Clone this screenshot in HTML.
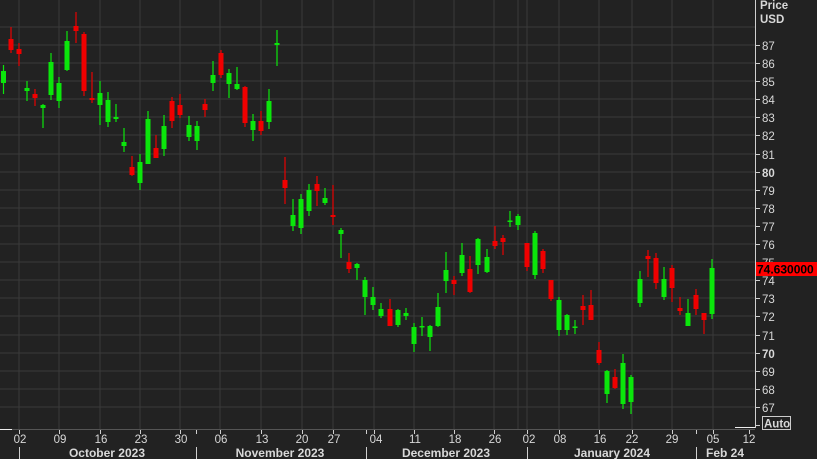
<!DOCTYPE html>
<html><head><meta charset="utf-8"><style>
html,body{margin:0;padding:0;background:#222222;width:817px;height:459px;overflow:hidden}
svg{display:block}
text{font-family:"Liberation Sans",sans-serif;fill:#d8d8d8}
.g line{stroke:#0be60b;stroke-width:1.2}
.g rect{fill:#0be60b}
.r line{stroke:#e80000;stroke-width:1.2}
.r rect{fill:#f00000}
</style></head><body>
<svg width="817" height="459" viewBox="0 0 817 459" xmlns="http://www.w3.org/2000/svg">
<rect width="817" height="459" fill="#222222"/>
<g stroke="#3a3a3a" stroke-width="1">
<line x1="0" x2="755" y1="27" y2="27"/><line x1="0" x2="755" y1="45" y2="45"/><line x1="0" x2="755" y1="63" y2="63"/><line x1="0" x2="755" y1="81" y2="81"/><line x1="0" x2="755" y1="99" y2="99"/><line x1="0" x2="755" y1="117" y2="117"/><line x1="0" x2="755" y1="135" y2="135"/><line x1="0" x2="755" y1="154" y2="154"/><line x1="0" x2="755" y1="172" y2="172"/><line x1="0" x2="755" y1="190" y2="190"/><line x1="0" x2="755" y1="208" y2="208"/><line x1="0" x2="755" y1="226" y2="226"/><line x1="0" x2="755" y1="244" y2="244"/><line x1="0" x2="755" y1="262" y2="262"/><line x1="0" x2="755" y1="280" y2="280"/><line x1="0" x2="755" y1="298" y2="298"/><line x1="0" x2="755" y1="316" y2="316"/><line x1="0" x2="755" y1="335" y2="335"/><line x1="0" x2="755" y1="353" y2="353"/><line x1="0" x2="755" y1="371" y2="371"/><line x1="0" x2="755" y1="389" y2="389"/><line x1="0" x2="755" y1="407" y2="407"/>
<line x1="19" x2="19" y1="0" y2="430"/><line x1="59" x2="59" y1="0" y2="430"/><line x1="100" x2="100" y1="0" y2="430"/><line x1="140" x2="140" y1="0" y2="430"/><line x1="180" x2="180" y1="0" y2="430"/><line x1="220" x2="220" y1="0" y2="430"/><line x1="261" x2="261" y1="0" y2="430"/><line x1="302" x2="302" y1="0" y2="430"/><line x1="333" x2="333" y1="0" y2="430"/><line x1="374" x2="374" y1="0" y2="430"/><line x1="414" x2="414" y1="0" y2="430"/><line x1="454" x2="454" y1="0" y2="430"/><line x1="494" x2="494" y1="0" y2="430"/><line x1="518" x2="518" y1="0" y2="430"/><line x1="527" x2="527" y1="0" y2="430"/><line x1="559" x2="559" y1="0" y2="430"/><line x1="599" x2="599" y1="0" y2="430"/><line x1="632" x2="632" y1="0" y2="430"/><line x1="672" x2="672" y1="0" y2="430"/><line x1="713" x2="713" y1="0" y2="430"/>
</g>
<line x1="0" x2="755" y1="429.5" y2="429.5" stroke="#555"/>
<line x1="0" x2="12" y1="429.5" y2="429.5" stroke="#eee"/>
<line x1="735" x2="755" y1="427.5" y2="427.5" stroke="#eee"/>
<line x1="755.5" x2="755.5" y1="0" y2="428" stroke="#cfcfcf"/>
<g class="g"><line x1="3.5" x2="3.5" y1="65" y2="94"/><rect x="1" y="71" width="5" height="12"/></g>
<g class="r"><line x1="11" x2="11" y1="27" y2="53"/><rect x="8.5" y="39" width="5" height="11"/></g>
<g class="r"><line x1="19" x2="19" y1="43" y2="66"/><rect x="16.5" y="49" width="5" height="5"/></g>
<g class="g"><line x1="27" x2="27" y1="81" y2="101"/><rect x="24.5" y="88" width="5" height="3"/></g>
<g class="r"><line x1="35" x2="35" y1="89" y2="106"/><rect x="32.5" y="94" width="5" height="4"/></g>
<g class="g"><line x1="43" x2="43" y1="104" y2="128"/><rect x="40.5" y="105" width="5" height="3"/></g>
<g class="g"><line x1="51" x2="51" y1="53" y2="100"/><rect x="48.5" y="62" width="5" height="33"/></g>
<g class="g"><line x1="59" x2="59" y1="77" y2="108"/><rect x="56.5" y="83" width="5" height="18"/></g>
<g class="g"><line x1="67" x2="67" y1="31" y2="71"/><rect x="64.5" y="41" width="5" height="29"/></g>
<g class="r"><line x1="76" x2="76" y1="12" y2="43"/><rect x="73.5" y="26" width="5" height="5"/></g>
<g class="r"><line x1="84" x2="84" y1="32" y2="96"/><rect x="81.5" y="34" width="5" height="57"/></g>
<g class="r"><line x1="92" x2="92" y1="72" y2="103"/><rect x="89.5" y="98" width="5" height="2"/></g>
<g class="g"><line x1="100" x2="100" y1="81" y2="125"/><rect x="97.5" y="93" width="5" height="12"/></g>
<g class="g"><line x1="108" x2="108" y1="92" y2="127"/><rect x="105.5" y="100" width="5" height="22"/></g>
<g class="g"><line x1="116" x2="116" y1="104" y2="122"/><rect x="113.5" y="117" width="5" height="2"/></g>
<g class="g"><line x1="124" x2="124" y1="128" y2="152"/><rect x="121.5" y="142" width="5" height="4"/></g>
<g class="r"><line x1="132" x2="132" y1="156" y2="176"/><rect x="129.5" y="167" width="5" height="8"/></g>
<g class="g"><line x1="140" x2="140" y1="154" y2="190"/><rect x="137.5" y="162" width="5" height="21"/></g>
<g class="g"><line x1="148" x2="148" y1="111" y2="164"/><rect x="145.5" y="119" width="5" height="45"/></g>
<g class="r"><line x1="156" x2="156" y1="135" y2="158"/><rect x="153.5" y="148" width="5" height="10"/></g>
<g class="g"><line x1="164" x2="164" y1="115" y2="156"/><rect x="161.5" y="126" width="5" height="23"/></g>
<g class="r"><line x1="172" x2="172" y1="97" y2="128"/><rect x="169.5" y="101" width="5" height="20"/></g>
<g class="r"><line x1="180" x2="180" y1="94" y2="118"/><rect x="177.5" y="105" width="5" height="10"/></g>
<g class="g"><line x1="189" x2="189" y1="116" y2="141"/><rect x="186.5" y="125" width="5" height="12"/></g>
<g class="g"><line x1="197" x2="197" y1="121" y2="150"/><rect x="194.5" y="126" width="5" height="15"/></g>
<g class="r"><line x1="205" x2="205" y1="99" y2="117"/><rect x="202.5" y="104" width="5" height="6"/></g>
<g class="g"><line x1="213" x2="213" y1="61" y2="91"/><rect x="210.5" y="75" width="5" height="8"/></g>
<g class="r"><line x1="221" x2="221" y1="50" y2="78"/><rect x="218.5" y="53" width="5" height="22"/></g>
<g class="g"><line x1="229" x2="229" y1="69" y2="98"/><rect x="226.5" y="73" width="5" height="11"/></g>
<g class="g"><line x1="237" x2="237" y1="67" y2="90"/><rect x="234.5" y="84" width="5" height="5"/></g>
<g class="r"><line x1="245" x2="245" y1="86" y2="127"/><rect x="242.5" y="87" width="5" height="36"/></g>
<g class="g"><line x1="253" x2="253" y1="114" y2="141"/><rect x="250.5" y="121" width="5" height="9"/></g>
<g class="r"><line x1="261" x2="261" y1="111" y2="135"/><rect x="258.5" y="121" width="5" height="10"/></g>
<g class="g"><line x1="269" x2="269" y1="89" y2="129"/><rect x="266.5" y="101" width="5" height="21"/></g>
<g class="g"><line x1="277" x2="277" y1="30" y2="66"/><rect x="274.5" y="43" width="5" height="2"/></g>
<g class="r"><line x1="285" x2="285" y1="157" y2="204"/><rect x="282.5" y="180" width="5" height="8"/></g>
<g class="g"><line x1="293" x2="293" y1="199" y2="231"/><rect x="290.5" y="215" width="5" height="11"/></g>
<g class="g"><line x1="301" x2="301" y1="194" y2="234"/><rect x="298.5" y="199" width="5" height="29"/></g>
<g class="g"><line x1="309" x2="309" y1="184" y2="216"/><rect x="306.5" y="190" width="5" height="21"/></g>
<g class="r"><line x1="317" x2="317" y1="176" y2="206"/><rect x="314.5" y="184" width="5" height="7"/></g>
<g class="g"><line x1="325" x2="325" y1="188" y2="205"/><rect x="322.5" y="198" width="5" height="5"/></g>
<g class="r"><line x1="333" x2="333" y1="185" y2="225"/><rect x="330.5" y="215" width="5" height="2"/></g>
<g class="g"><line x1="341" x2="341" y1="228" y2="258"/><rect x="338.5" y="230" width="5" height="4"/></g>
<g class="r"><line x1="349" x2="349" y1="253" y2="273"/><rect x="346.5" y="262" width="5" height="7"/></g>
<g class="g"><line x1="357" x2="357" y1="263" y2="280"/><rect x="354.5" y="264" width="5" height="4"/></g>
<g class="g"><line x1="365" x2="365" y1="277" y2="315"/><rect x="362.5" y="280" width="5" height="17"/></g>
<g class="g"><line x1="373" x2="373" y1="287" y2="310"/><rect x="370.5" y="297" width="5" height="8"/></g>
<g class="g"><line x1="381" x2="381" y1="303" y2="318"/><rect x="378.5" y="309" width="5" height="7"/></g>
<g class="r"><line x1="390" x2="390" y1="299" y2="326"/><rect x="387.5" y="309" width="5" height="17"/></g>
<g class="g"><line x1="398" x2="398" y1="309" y2="327"/><rect x="395.5" y="310" width="5" height="15"/></g>
<g class="g"><line x1="406" x2="406" y1="308" y2="320"/><rect x="403.5" y="313" width="5" height="3"/></g>
<g class="g"><line x1="414" x2="414" y1="323" y2="352"/><rect x="411.5" y="327" width="5" height="17"/></g>
<g class="g"><line x1="422" x2="422" y1="317" y2="336"/><rect x="419.5" y="326" width="5" height="1.5"/></g>
<g class="g"><line x1="430" x2="430" y1="325" y2="351"/><rect x="427.5" y="326" width="5" height="11"/></g>
<g class="g"><line x1="438" x2="438" y1="293" y2="327"/><rect x="435.5" y="307" width="5" height="19"/></g>
<g class="g"><line x1="446" x2="446" y1="252" y2="293"/><rect x="443.5" y="270" width="5" height="11"/></g>
<g class="r"><line x1="454" x2="454" y1="276" y2="295"/><rect x="451.5" y="280" width="5" height="4"/></g>
<g class="g"><line x1="462" x2="462" y1="243" y2="276"/><rect x="459.5" y="255" width="5" height="18"/></g>
<g class="r"><line x1="470" x2="470" y1="256" y2="293"/><rect x="467.5" y="269" width="5" height="23"/></g>
<g class="g"><line x1="478" x2="478" y1="238" y2="274"/><rect x="475.5" y="239" width="5" height="26"/></g>
<g class="g"><line x1="487" x2="487" y1="249" y2="273"/><rect x="484.5" y="257" width="5" height="15"/></g>
<g class="r"><line x1="495" x2="495" y1="226" y2="249"/><rect x="492.5" y="241" width="5" height="5"/></g>
<g class="r"><line x1="503" x2="503" y1="235" y2="255"/><rect x="500.5" y="238" width="5" height="4"/></g>
<g class="g"><line x1="510" x2="510" y1="211" y2="227"/><rect x="507.5" y="220.5" width="5" height="1.5"/></g>
<g class="g"><line x1="518" x2="518" y1="214" y2="230"/><rect x="515.5" y="216" width="5" height="9"/></g>
<g class="r"><line x1="527" x2="527" y1="243" y2="271"/><rect x="524.5" y="243" width="5" height="24"/></g>
<g class="g"><line x1="535" x2="535" y1="231" y2="279"/><rect x="532.5" y="233" width="5" height="42"/></g>
<g class="r"><line x1="543" x2="543" y1="249" y2="273"/><rect x="540.5" y="251" width="5" height="18"/></g>
<g class="r"><line x1="551" x2="551" y1="280" y2="301"/><rect x="548.5" y="280" width="5" height="19"/></g>
<g class="g"><line x1="559" x2="559" y1="297" y2="336"/><rect x="556.5" y="300" width="5" height="30"/></g>
<g class="g"><line x1="567" x2="567" y1="314" y2="335"/><rect x="564.5" y="315" width="5" height="15"/></g>
<g class="g"><line x1="575" x2="575" y1="320" y2="334"/><rect x="572.5" y="326.5" width="5" height="1.5"/></g>
<g class="r"><line x1="583" x2="583" y1="295" y2="325"/><rect x="580.5" y="306" width="5" height="4"/></g>
<g class="r"><line x1="591" x2="591" y1="290" y2="320"/><rect x="588.5" y="305" width="5" height="15"/></g>
<g class="r"><line x1="599" x2="599" y1="342" y2="365"/><rect x="596.5" y="350" width="5" height="13"/></g>
<g class="g"><line x1="607" x2="607" y1="370" y2="403"/><rect x="604.5" y="371" width="5" height="23"/></g>
<g class="r"><line x1="615" x2="615" y1="369" y2="389"/><rect x="612.5" y="377" width="5" height="11"/></g>
<g class="g"><line x1="623" x2="623" y1="354" y2="409"/><rect x="620.5" y="363" width="5" height="41"/></g>
<g class="g"><line x1="631" x2="631" y1="375" y2="414"/><rect x="628.5" y="377" width="5" height="25"/></g>
<g class="g"><line x1="640" x2="640" y1="271" y2="307"/><rect x="637.5" y="279" width="5" height="24"/></g>
<g class="r"><line x1="648" x2="648" y1="250" y2="277"/><rect x="645.5" y="256" width="5" height="3"/></g>
<g class="r"><line x1="656" x2="656" y1="253" y2="289"/><rect x="653.5" y="258" width="5" height="25"/></g>
<g class="g"><line x1="664" x2="664" y1="267" y2="300"/><rect x="661.5" y="279" width="5" height="18"/></g>
<g class="r"><line x1="672" x2="672" y1="265" y2="302"/><rect x="669.5" y="268" width="5" height="20"/></g>
<g class="r"><line x1="680" x2="680" y1="297" y2="315"/><rect x="677.5" y="308" width="5" height="3"/></g>
<g class="g"><line x1="688" x2="688" y1="299" y2="326"/><rect x="685.5" y="313" width="5" height="13"/></g>
<g class="r"><line x1="696" x2="696" y1="289" y2="315"/><rect x="693.5" y="295" width="5" height="14"/></g>
<g class="r"><line x1="704" x2="704" y1="313" y2="334"/><rect x="701.5" y="313" width="5" height="7"/></g>
<g class="g"><line x1="712" x2="712" y1="259" y2="319"/><rect x="709.5" y="268" width="5" height="46"/></g>
<g stroke="#cfcfcf"><line x1="755" x2="760" y1="45.5" y2="45.5"/><line x1="755" x2="760" y1="63.5" y2="63.5"/><line x1="755" x2="760" y1="81.5" y2="81.5"/><line x1="755" x2="760" y1="99.5" y2="99.5"/><line x1="755" x2="760" y1="117.5" y2="117.5"/><line x1="755" x2="760" y1="135.5" y2="135.5"/><line x1="755" x2="760" y1="154.5" y2="154.5"/><line x1="755" x2="760" y1="172.5" y2="172.5"/><line x1="755" x2="760" y1="190.5" y2="190.5"/><line x1="755" x2="760" y1="208.5" y2="208.5"/><line x1="755" x2="760" y1="226.5" y2="226.5"/><line x1="755" x2="760" y1="244.5" y2="244.5"/><line x1="755" x2="760" y1="280.5" y2="280.5"/><line x1="755" x2="760" y1="298.5" y2="298.5"/><line x1="755" x2="760" y1="316.5" y2="316.5"/><line x1="755" x2="760" y1="335.5" y2="335.5"/><line x1="755" x2="760" y1="353.5" y2="353.5"/><line x1="755" x2="760" y1="371.5" y2="371.5"/><line x1="755" x2="760" y1="389.5" y2="389.5"/><line x1="755" x2="760" y1="407.5" y2="407.5"/><line x1="755" x2="760" y1="425.5" y2="425.5"/></g>
<g font-size="11.5">
<text x="760" y="9" font-weight="bold">Price</text><text x="760" y="23" font-weight="bold">USD</text>
<text x="762" y="50">87</text><text x="762" y="68">86</text><text x="762" y="86">85</text><text x="762" y="104">84</text><text x="762" y="122">83</text><text x="762" y="140">82</text><text x="762" y="159">81</text><text x="762" y="177" font-weight="bold">80</text><text x="762" y="195">79</text><text x="762" y="213">78</text><text x="762" y="231">77</text><text x="762" y="249">76</text><text x="762" y="267">75</text><text x="762" y="285">74</text><text x="762" y="303">73</text><text x="762" y="321">72</text><text x="762" y="340">71</text><text x="762" y="358" font-weight="bold">70</text><text x="762" y="376">69</text><text x="762" y="394">68</text><text x="762" y="412">67</text>
</g>
<rect x="756" y="262" width="61" height="14" fill="#ff0000"/>
<text x="757" y="273.5" font-size="12" font-weight="bold" style="fill:#000">74.630000</text>
<rect x="762.5" y="416.5" width="28" height="13" fill="none" stroke="#ccc"/>
<text x="764" y="427.5" font-size="11.5" font-weight="bold">Auto</text>
<g stroke="#cfcfcf"><line x1="19.5" x2="19.5" y1="430" y2="434"/><line x1="59.5" x2="59.5" y1="430" y2="434"/><line x1="100.5" x2="100.5" y1="430" y2="434"/><line x1="140.5" x2="140.5" y1="430" y2="434"/><line x1="180.5" x2="180.5" y1="430" y2="434"/><line x1="196.5" x2="196.5" y1="430" y2="434"/><line x1="220.5" x2="220.5" y1="430" y2="434"/><line x1="261.5" x2="261.5" y1="430" y2="434"/><line x1="302.5" x2="302.5" y1="430" y2="434"/><line x1="333.5" x2="333.5" y1="430" y2="434"/><line x1="366.5" x2="366.5" y1="430" y2="434"/><line x1="374.5" x2="374.5" y1="430" y2="434"/><line x1="414.5" x2="414.5" y1="430" y2="434"/><line x1="454.5" x2="454.5" y1="430" y2="434"/><line x1="494.5" x2="494.5" y1="430" y2="434"/><line x1="527.5" x2="527.5" y1="430" y2="434"/><line x1="559.5" x2="559.5" y1="430" y2="434"/><line x1="599.5" x2="599.5" y1="430" y2="434"/><line x1="632.5" x2="632.5" y1="430" y2="434"/><line x1="672.5" x2="672.5" y1="430" y2="434"/><line x1="696.5" x2="696.5" y1="430" y2="434"/><line x1="713.5" x2="713.5" y1="430" y2="434"/><line x1="749.5" x2="749.5" y1="430" y2="434"/>
<line x1="19.5" x2="19.5" y1="447" y2="459"/><line x1="196.5" x2="196.5" y1="447" y2="459"/><line x1="366.5" x2="366.5" y1="447" y2="459"/><line x1="527.5" x2="527.5" y1="447" y2="459"/><line x1="696.5" x2="696.5" y1="447" y2="459"/></g>
<g font-size="11.5" text-anchor="middle">
<text x="20" y="443">02</text><text x="60" y="443">09</text><text x="101" y="443">16</text><text x="141" y="443">23</text><text x="181" y="443">30</text><text x="221" y="443">06</text><text x="262" y="443">13</text><text x="302" y="443">20</text><text x="334" y="443">27</text><text x="376" y="443">04</text><text x="415" y="443">11</text><text x="455" y="443">18</text><text x="495" y="443">26</text><text x="529" y="443">02</text><text x="560" y="443">08</text><text x="600" y="443">16</text><text x="632" y="443">22</text><text x="672" y="443">29</text><text x="713" y="443">05</text><text x="749" y="443">12</text>
</g>
<g font-size="12" font-weight="bold" text-anchor="middle">
<text x="107" y="457">October 2023</text><text x="280" y="457">November 2023</text><text x="446" y="457">December 2023</text><text x="612" y="457">January 2024</text><text x="725" y="457">Feb 24</text>
</g>
</svg>
</body></html>
